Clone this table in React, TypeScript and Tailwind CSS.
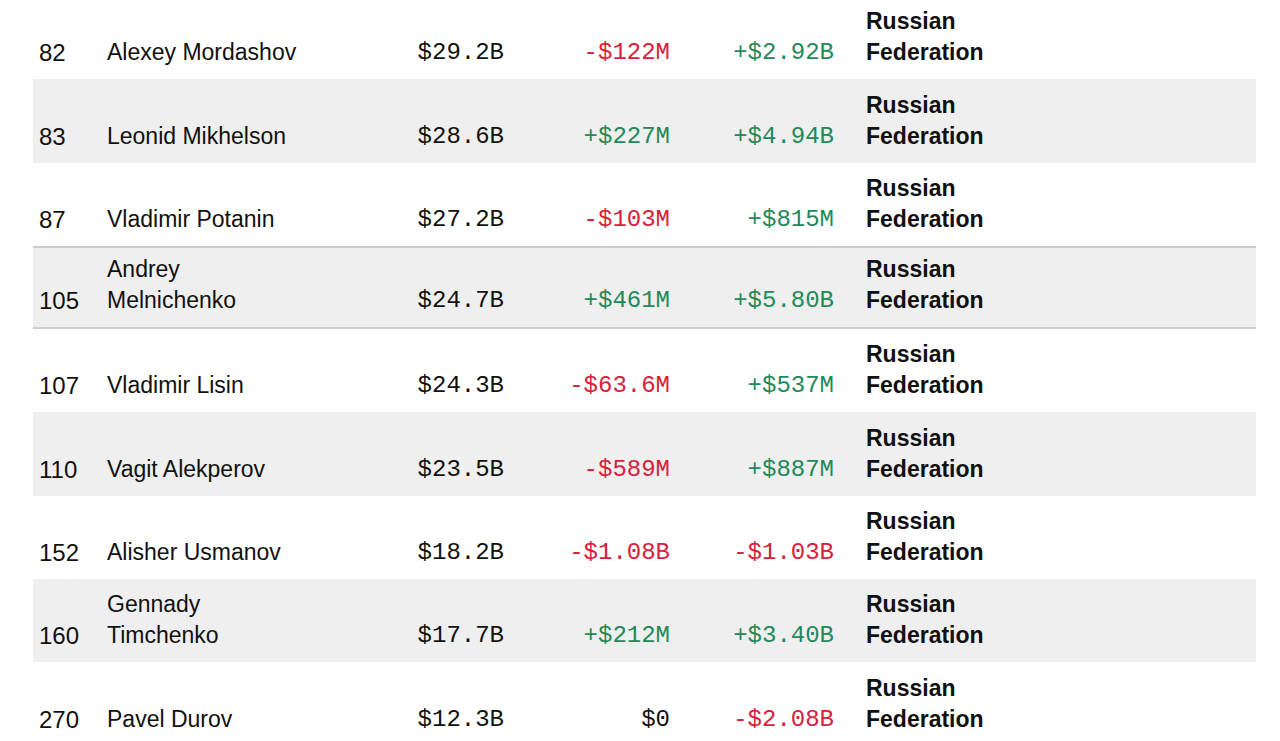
const rows = [
  { rank: '82', name: 'Alexey Mordashov', worth: '$29.2B', day: '-$122M', ytd: '+$2.92B' },
  { rank: '83', name: 'Leonid Mikhelson', worth: '$28.6B', day: '+$227M', ytd: '+$4.94B' },
  { rank: '87', name: 'Vladimir Potanin', worth: '$27.2B', day: '-$103M', ytd: '+$815M' },
  { rank: '105', name: 'Andrey Melnichenko', worth: '$24.7B', day: '+$461M', ytd: '+$5.80B', marked: true },
  { rank: '107', name: 'Vladimir Lisin', worth: '$24.3B', day: '-$63.6M', ytd: '+$537M' },
  { rank: '110', name: 'Vagit Alekperov', worth: '$23.5B', day: '-$589M', ytd: '+$887M' },
  { rank: '152', name: 'Alisher Usmanov', worth: '$18.2B', day: '-$1.08B', ytd: '-$1.03B' },
  { rank: '160', name: 'Gennady Timchenko', worth: '$17.7B', day: '+$212M', ytd: '+$3.40B' },
  { rank: '270', name: 'Pavel Durov', worth: '$12.3B', day: '$0', ytd: '-$2.08B' },
];

function changeColor(v: string) {
  if (v.startsWith('-')) return 'text-[#d8203b]';
  if (v.startsWith('+')) return 'text-[#21895a]';
  return 'text-[#111]';
}

export default function App() {
  return (
    <div className="h-[741px] w-[1280px] overflow-hidden bg-white font-['Liberation_Sans',Arial,sans-serif] text-[#111]">
      <div className="ml-[33px] mt-[-4px] w-[1223px]">
        {rows.map((r, i) => (
          <div
            key={r.rank}
            className={
              'flex h-[83.3px] items-end pb-[11px] ' +
              (i % 2 === 1 ? 'bg-[#efefef] ' : '') +
              (r.marked ? 'border-y-2 border-[#cdcdcd] bg-[#efefef] pb-[9px]' : '')
            }
          >
            <div className="w-[74px] pl-[6px] text-[24px] leading-[31px]">{r.rank}</div>
            <div className="w-[205px] text-[23px] leading-[31px]">{r.name}</div>
            <div className="w-[192px] text-right font-['Liberation_Mono',monospace] text-[24px] leading-[31px]">
              {r.worth}
            </div>
            <div
              className={
                'w-[166px] text-right font-[\'Liberation_Mono\',monospace] text-[24px] leading-[31px] ' +
                changeColor(r.day)
              }
            >
              {r.day}
            </div>
            <div
              className={
                'w-[164px] text-right font-[\'Liberation_Mono\',monospace] text-[24px] leading-[31px] ' +
                changeColor(r.ytd)
              }
            >
              {r.ytd}
            </div>
            <div className="pl-[32px] text-[23px] font-bold leading-[31px]">
              Russian
              <br />
              Federation
            </div>
          </div>
        ))}
      </div>
    </div>
  );
}
